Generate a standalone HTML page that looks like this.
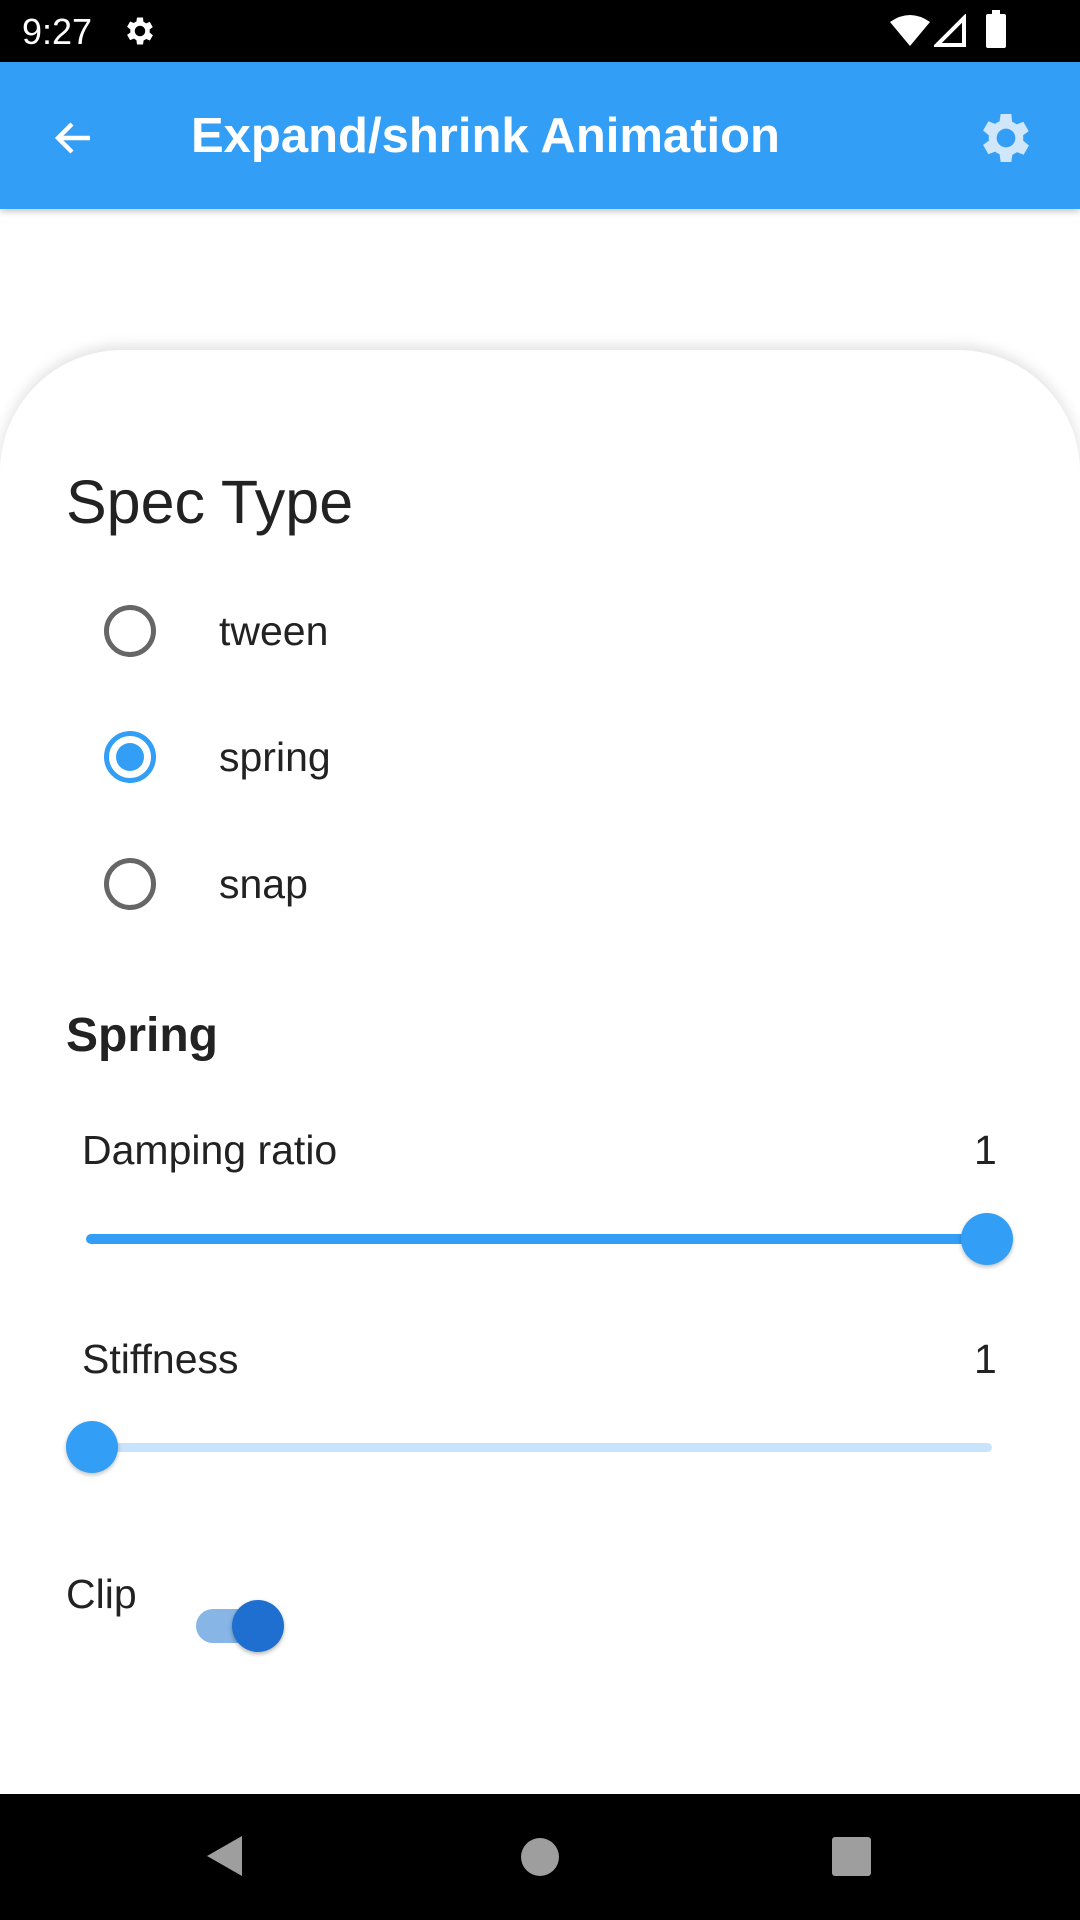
<!DOCTYPE html>
<html><head><style>
body{margin:0;width:1080px;height:1920px;position:relative;background:#fff;font-family:"Liberation Sans",sans-serif;overflow:hidden;color:#222}
.a{position:absolute}
.t{position:absolute;white-space:nowrap;line-height:1}
</style></head><body>
<div class="a" style="left:0;top:0;width:1080px;height:62px;background:#000"></div>
<div class="t" style="left:22px;top:14px;font-size:36px;color:#fff">9:27</div>
<svg class="a" style="left:122px;top:13px" width="36" height="36" viewBox="0 0 24 24"><path fill="#fff" d="M19.4 13a7.5 7.5 0 000-2l2.1-1.6-2-3.5-2.5 1a7 7 0 00-1.7-1L15 3h-4l-.4 2.7a7 7 0 00-1.7 1l-2.5-1-2 3.5L6.6 11a7.5 7.5 0 000 2l-2.2 1.6 2 3.5 2.5-1c.5.4 1.1.7 1.7 1L11 21h4l.4-2.7c.6-.3 1.2-.6 1.7-1l2.5 1 2-3.5zM13 15.5a3.5 3.5 0 110-7 3.5 3.5 0 010 7z" transform="translate(-1 0)"/></svg>
<svg class="a" style="left:890px;top:14px" width="40" height="34" viewBox="0 0 40 34"><path fill="#fff" d="M20 32L0 8Q20-6 40 8z"/></svg>
<svg class="a" style="left:934px;top:14px" width="34" height="34" viewBox="0 0 34 34"><path fill="none" stroke="#fff" stroke-width="4" d="M30 4V31H3z"/></svg>
<div class="a" style="left:986px;top:14px;width:20px;height:34px;background:#fff;border-radius:2px"></div>
<div class="a" style="left:992px;top:10px;width:8px;height:5px;background:#fff"></div>
<div class="a" style="left:0;top:62px;width:1080px;height:147px;background:#339ef5;box-shadow:0 3px 6px rgba(0,0,0,.2)"></div>
<svg class="a" style="left:50px;top:114px" width="48" height="48" viewBox="0 0 24 24"><path fill="none" stroke="#fff" stroke-width="2.2" d="M20 12H5M11 5l-7 7 7 7"/></svg>
<div class="t" style="left:191px;top:112px;font-size:49px;font-weight:bold;color:#fff">Expand/shrink Animation</div>
<svg class="a" style="left:974px;top:106px" width="64" height="64" viewBox="0 0 24 24"><path fill="#cfe6fb" d="M19.4 13a7.5 7.5 0 000-2l2.1-1.6-2-3.5-2.5 1a7 7 0 00-1.7-1L15 3h-4l-.4 2.7a7 7 0 00-1.7 1l-2.5-1-2 3.5L6.6 11a7.5 7.5 0 000 2l-2.2 1.6 2 3.5 2.5-1c.5.4 1.1.7 1.7 1L11 21h4l.4-2.7c.6-.3 1.2-.6 1.7-1l2.5 1 2-3.5zM13 15.5a3.5 3.5 0 110-7 3.5 3.5 0 010 7z" transform="translate(-1 0)"/></svg>
<div class="a" style="left:0;top:350px;width:1080px;height:1500px;background:#fff;border-radius:122px 122px 0 0;box-shadow:0 -4px 14px rgba(0,0,0,.12)"></div>
<div class="t" style="left:66px;top:472px;font-size:61px">Spec Type</div>
<div class="a" style="left:104px;top:605px;width:42px;height:42px;border:5px solid #666;border-radius:50%"></div>
<div class="a" style="left:104px;top:731px;width:42px;height:42px;border:5px solid #339ef5;border-radius:50%"></div>
<div class="a" style="left:116px;top:743px;width:28px;height:28px;background:#339ef5;border-radius:50%"></div>
<div class="a" style="left:104px;top:858px;width:42px;height:42px;border:5px solid #666;border-radius:50%"></div>
<div class="t" style="left:219px;top:611px;font-size:41px">tween</div>
<div class="t" style="left:219px;top:737px;font-size:41px">spring</div>
<div class="t" style="left:219px;top:864px;font-size:41px">snap</div>
<div class="t" style="left:66px;top:1012px;font-size:48px;font-weight:bold;color:#222">Spring</div>
<div class="t" style="left:82px;top:1130px;font-size:41px">Damping ratio</div>
<div class="t" style="left:974px;top:1130px;font-size:41px">1</div>
<div class="a" style="left:86px;top:1234px;width:903px;height:10px;background:#339ef5;border-radius:5px"></div>
<div class="a" style="left:961px;top:1213px;width:52px;height:52px;background:#339ef5;border-radius:50%;box-shadow:0 2px 4px rgba(0,0,0,.25)"></div>
<div class="t" style="left:82px;top:1339px;font-size:41px">Stiffness</div>
<div class="t" style="left:974px;top:1339px;font-size:41px">1</div>
<div class="a" style="left:92px;top:1443px;width:900px;height:9px;background:#c8e3fb;border-radius:5px"></div>
<div class="a" style="left:66px;top:1421px;width:52px;height:52px;background:#339ef5;border-radius:50%;box-shadow:0 2px 4px rgba(0,0,0,.25)"></div>
<div class="t" style="left:66px;top:1574px;font-size:41px">Clip</div>
<div class="a" style="left:196px;top:1609px;width:84px;height:34px;background:#86b5e6;border-radius:17px"></div>
<div class="a" style="left:232px;top:1600px;width:52px;height:52px;background:#1e6fcf;border-radius:50%;box-shadow:0 2px 4px rgba(0,0,0,.3)"></div>
<div class="a" style="left:0;top:1794px;width:1080px;height:126px;background:#000"></div>
<svg class="a" style="left:204px;top:1834px" width="42" height="44" viewBox="0 0 42 44"><path fill="#9e9e9e" d="M38 2V42L3 22z"/></svg>
<div class="a" style="left:521px;top:1838px;width:38px;height:38px;background:#9e9e9e;border-radius:50%"></div>
<div class="a" style="left:832px;top:1837px;width:39px;height:39px;background:#9e9e9e;border-radius:3px"></div>
</body></html>
